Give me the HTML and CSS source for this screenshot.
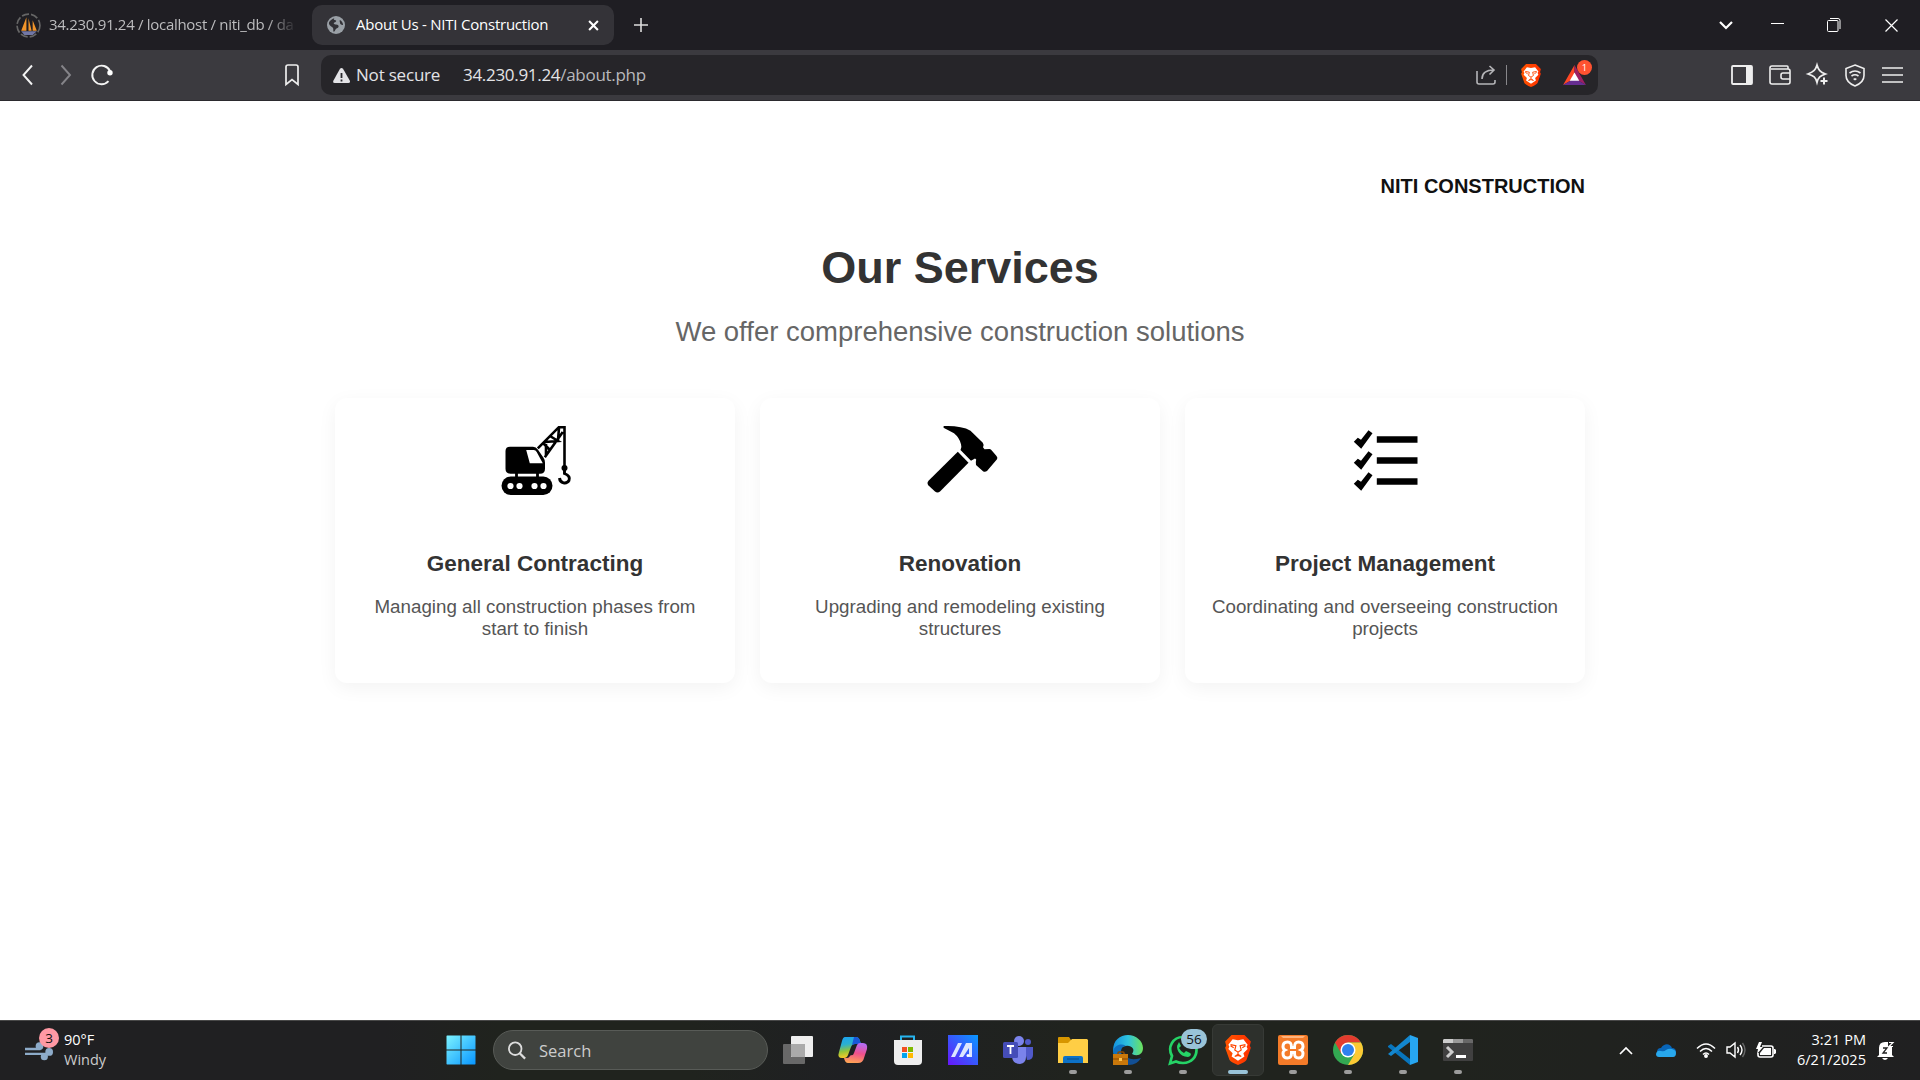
FILE: index.html
```html
<!DOCTYPE html>
<html lang="en">
<head>
<meta charset="utf-8">
<title>About Us - NITI Construction</title>
<link rel="stylesheet" href="styles.css">
</head>
<body>
<div class="tabs">
  <div class="tab">
    <svg class="ic24" viewBox="0 0 24 24"><circle cx="12" cy="12" r="11" fill="none" stroke="#666" stroke-width="1.6" stroke-dasharray="7 2"/><path d="M10 4 5 17h5zM12 5l3 12h-3zM16 7l4 10h-4z" fill="#f2952a"/><path d="M5 17.500h15l-4 3.500H8z" fill="#7277a5"/></svg>
    <span class="tab-text fade">34.230.91.24 / localhost / niti_db / da</span>
  </div>
  <div class="tab active">
    <svg class="globe" viewBox="0 0 18 18"><circle cx="9" cy="9" r="9" fill="#9aa0a6"/><path d="M8 2c-2 1-1 2 .5 2.200C10 4.500 9 6 7.500 6.500S7 8.500 9 8.500s3 1 2.500 2.500S9 12 8.500 13.500 7 16.500 6.500 15.500 7 12 5 11 1.500 8 2 6.500 5 2.500 8 2zM13 4c2 1 3 3 3 5-1 0-3-.5-3-2s-1-2 0-3z" fill="#323136"/></svg>
    <span class="tab-text title">About Us - NITI Construction</span>
    <svg class="tab-x" viewBox="0 0 10 10"><path d="m1 1 8 8m0-8-8 8" stroke="#fff" stroke-width="1.900"/></svg>
  </div>
  <svg class="plus" viewBox="0 0 14 14"><path d="M7 0v14M0 7h14" stroke="#ddd" stroke-width="1.600"/></svg>
  <div class="window">
    <svg width="14" height="10" viewBox="0 0 14 10"><path d="m1 2 6 6 6-6" fill="none" stroke="#fff" stroke-width="2.200"/></svg>
    <svg width="13" height="14" viewBox="0 0 13 14"><path d="M0 5.500h13" stroke="#fff"/></svg>
    <svg width="14" height="14" viewBox="0 0 14 14" fill="none" stroke="#fff"><rect x=".5" y="2.500" width="10.500" height="11" rx="1"/><path d="M3 .5h8a2 2 0 0 1 2 2V11"/></svg>
    <svg width="13" height="13" viewBox="0 0 13 13"><path d="m.5.500 12 12m0-12-12 12" stroke="#fff" stroke-width="1.200"/></svg>
  </div>
</div>
<div class="toolbar">
  <svg class="nav" viewBox="0 0 100 24" fill="none" stroke-width="1.900"><path d="m15 2.500-8.500 9.500 8.500 9.500" stroke="#f3f3f3"/><path d="m44.500 2.500 8.500 9.500-8.500 9.500" stroke="#858489"/><path d="M91.500 18.200A9.300 9.300 0 1 1 93 8" stroke="#f3f3f3"/><circle cx="93" cy="9.800" r="2.700" fill="#fff"/></svg>
  <svg class="bookmark" viewBox="0 0 14 22"><path d="M1 3q0-2 2-2h8q2 0 2 2v17.500l-6-5-6 5z" fill="none" stroke="#eee" stroke-width="1.700"/></svg>
  <div class="address">
    <svg class="warn" viewBox="0 0 17 15"><path d="M7 .8q1.500-1.500 3 0l7 12.200q.5 2-1.500 2h-14Q-.5 15 .2 13z" fill="#e3e3e6"/><path d="M8.500 5v5m0 1.500v2" stroke="#29282d" stroke-width="1.800"/></svg>
    <span class="secure">Not secure</span>
    <span class="url">34.230.91.24<i>/about.php</i></span>
    <svg class="share" viewBox="0 0 20 20" fill="none" stroke="#b5b5b8" stroke-width="1.600"><path d="M1 6v11q0 2 2 2h14q2 0 2-2v-2M6 14c0-6 4-9 12-9M13.500 1 18 5l-4.500 4.500"/></svg>
    <span class="divider"></span>
    <svg class="brave" viewBox="0 0 24 28"><use href="#lion"/></svg>
    <div class="bat"><svg viewBox="0 0 24 21"><path d="M12 0 0 21l12-7z" fill="#ff4724"/><path d="m12 0 12 21-12-7z" fill="#9e1f63"/><path d="M0 21h24l-12-7z" fill="#662d91"/><path d="m12 8 5 8.500H7z" fill="#fff"/></svg><span>1</span></div>
  </div>
  <div class="tools">
    <svg width="22" height="20" viewBox="0 0 22 20"><rect x="1" y="1" width="20" height="18" rx="1" fill="none" stroke="#eee" stroke-width="1.800"/><path d="M15 1h6v18h-6z" fill="#eee"/></svg>
    <svg width="22" height="20" viewBox="0 0 22 20" fill="none" stroke="#eee" stroke-width="1.600"><path d="M19 4V2q0-1-1-1H3Q1 1 1 3v14q0 2 2 2h16q2 0 2-2V6q0-2-2-2H2M21 8h-7q-2 0-2 2v2q0 2 2 2h7"/></svg>
    <svg width="22" height="22" viewBox="0 0 22 22" fill="none" stroke="#eee"><path d="M10 1c1.500 5 3 7 8.500 9C13 12 11.500 13 10 18.500 8.500 13 7 12 1 10 7 7.500 8.500 6 10 1z" stroke-width="1.700"/><path d="M17 13.500v7M13.500 17h7" stroke-width="2"/></svg>
    <svg width="20" height="23" viewBox="0 0 20 23" fill="none" stroke="#eee" stroke-width="1.600"><path d="m10 1 9 3.500v7c0 5-4 8.500-9 10.500-5-2-9-5.500-9-10.500v-7zM4.500 9q5.500-4 11 0M6.500 12q3.500-2.500 7 0"/><path d="m8 15 2-1 2 1-2 1.500z" fill="#eee" stroke="none"/></svg>
    <svg width="21" height="16" viewBox="0 0 21 16"><path d="M0 1h21M0 8h21M0 15h21" stroke="#eee" stroke-width="1.600"/></svg>
  </div>
</div>
<main>
  <div class="brand">NITI CONSTRUCTION</div>
  <h1>Our Services</h1>
  <p class="sub">We offer comprehensive construction solutions</p>
  <div class="cards">
    <section>
      <svg viewBox="0 0 75 75"><path d="M12 22.700h23q3 0 5 3l5.500 8q1.500 2 1.500 5v6q0 5-5 5H12.500q-5 0-5-5V27q0-4.300 4.500-4.300z"/><path d="M28.200 26h7.500q2 0 3 2l6.100 11.300h-13z" fill="#fff"/><path d="M18.500 48v6m21-6v6" stroke="#000" stroke-width="2.800"/><rect x="3.500" y="52.500" width="51" height="18.500" rx="9.200"/><g fill="#fff"><circle cx="12.500" cy="62" r="3.100"/><circle cx="21.500" cy="62" r="3.100"/><circle cx="36.500" cy="62" r="3.100"/><circle cx="45.500" cy="62" r="3.100"/></g><path d="M39.800 24.300 60.800 3.200h5.700V43M46.800 33.300 64.800 8M45 19l7 7M47 18l13-1-8-5M48 20v12M61 4l-1 12" fill="none" stroke="#000" stroke-width="2.600"/><circle cx="66.500" cy="44" r="3"/><path d="M66.500 46v3.500c5 2 5.500 4.500 4.500 7-2.500 4-9 3-9.500-2.500" fill="none" stroke="#000" stroke-width="2.900"/></svg>
      <h2>General Contracting</h2><p>Managing all construction phases from start to finish</p>
    </section>
    <section>
      <svg viewBox="0 0 75 75"><path d="M21 2q9-.5 16.500 1.300 6 .7 10 3.400l12.300 12q1.500 2 .2 4.600l1.500 2 5-.3q1.500.3 2.500 1.700l4.500 5.300q1.500 1.800.5 3.300L64 47q-2 1.500-4 .3L53 41q-.5-3 .2-5.500l-1.200-1-4 2.200L37.500 26q1.500-3 .5-5.700-1.500-6.500-7-11L21 4q-1.500-1 0-2z"/><path d="m34.800 27.700 10.700 11L17 67.500q-2.500 2.200-5 0l-6.500-6q-2-2.500 0-4.800z"/></svg>
      <h2>Renovation</h2><p>Upgrading and remodeling existing structures</p>
    </section>
    <section>
      <svg viewBox="0 0 75 75"><g id="row"><path d="m5.800 17.700 4-4 3.200 2 7.500-9.400 4 3-11.300 15.400z"/><path d="M28.800 12.200h40.700v6.500H28.800z"/></g><use href="#row" y="21"/><use href="#row" y="42"/></svg>
      <h2>Project Management</h2><p>Coordinating and overseeing construction projects</p>
    </section>
  </div>
</main>
<footer>
  <div class="weather">
    <div class="wind"><svg viewBox="0 0 30 22" fill="none" stroke="#8dabc9" stroke-width="2.500"><path d="M0 11h16M0 16h25"/><g fill="#8dabc9" stroke="none"><circle cx="15" cy="8" r="4"/><circle cx="25" cy="14" r="4"/><circle cx="20" cy="19" r="3.700"/></g></svg><span>3</span></div>
    <div class="temp"><b>90°F</b><span>Windy</span></div>
  </div>
  <div class="apps">
    <div class="app start"><svg viewBox="0 0 30 30"><defs><linearGradient id="win" x2="1" y2="1"><stop stop-color="#7df3ff"/><stop offset="1" stop-color="#0795ff"/></linearGradient></defs><path d="M1 .5h13.500v14H.5V1zM15.500.5H29l.5.5v13.500h-14zM.5 15.500h14v14H1l-.5-.5zM15.500 15.500h14V29l-.5.5H15.500z" fill="url(#win)"/></svg></div>
    <div class="search"><svg viewBox="0 0 20 20" fill="none" stroke="#ddd" stroke-width="2"><circle cx="8" cy="8" r="7"/><path d="m13 13 6 6" stroke-width="2.500"/></svg><span>Search</span></div>
    <div class="app"><svg viewBox="0 0 30 30"><rect y="9" width="22" height="20" rx="1" fill="#686868"/><rect x="8" y="1" width="22" height="21" rx="1" fill="#eee"/><path d="M8 9h14v13H9l-1-1z" fill="#aaa"/></svg></div>
    <div class="app"><svg viewBox="0 0 30 30"><defs><linearGradient id="cpa" x2=".2" y2="1"><stop stop-color="#1aa2f5"/><stop offset=".4" stop-color="#2bb0d0"/><stop offset=".7" stop-color="#92c43a"/><stop offset="1" stop-color="#f9c928"/></linearGradient><linearGradient id="cpb" x1=".6" x2=".4" y2="1"><stop stop-color="#b36cf5"/><stop offset=".5" stop-color="#f0508c"/><stop offset="1" stop-color="#ffa355"/></linearGradient></defs><path d="M7 2h11q3 0 4 4l1 3h-6q-3 0-4 3l-3 8q-1 3-4 3H4q-5 0-3-6L4 6q1-4 3-4z" fill="url(#cpa)"/><path d="M16 2h2q3 0 4 4l1 3h-6l-3 1z" fill="#1958d8"/><path d="M22 8h3q5 0 4 6l-3 9q-1 5-6 5H10q-3 0-4-5h3q2 0 3-2l1-1q2 1 3-2l3-8q1-2 3-2z" fill="url(#cpb)"/></svg></div>
    <div class="app"><svg viewBox="0 0 30 30"><path d="M8 6V1.500h13V6" fill="none" stroke="#26b5ef" stroke-width="2"/><path d="M1 5h28v21q0 4-4 4H5q-4 0-4-4z" fill="#eee"/><path d="M9 12h5v5H9z" fill="#f25022"/><path d="M15 12h5v5h-5z" fill="#7fba00"/><path d="M9 18h5v5H9z" fill="#00a4ef"/><path d="M15 18h5v5h-5z" fill="#ffb900"/></svg></div>
    <div class="app"><svg viewBox="0 0 30 30"><defs><linearGradient id="ma" x1="1" x2="0" y2="1"><stop stop-color="#079aff"/><stop offset="1" stop-color="#6915fa"/></linearGradient></defs><path d="M0 0h30v30H0z" fill="url(#ma)"/><path d="M3 22 10 8h4L7 22zM11 22l7-14h6v14h-3V13l-6 9z" fill="#dce5ff"/><circle cx="20" cy="20.500" r="1.500" fill="#fff"/></svg></div>
    <div class="app"><svg viewBox="0 0 30 30"><circle cx="16" cy="6" r="5" fill="#7b83eb"/><circle cx="25" cy="7" r="3" fill="#5059c9"/><path d="M21 12h9v8q0 5-6 5z" fill="#5059c9"/><path d="M9 12h14v10q0 6-6 7-7 0-8-7z" fill="#7b83eb"/><rect y="7" width="15" height="16" rx="1.500" fill="#454db8"/><path d="M4 11h7M7.500 11v8" stroke="#fff" stroke-width="1.800"/></svg></div>
    <div class="app run"><svg viewBox="0 0 30 30"><path d="M0 3q0-1 1-1h10l2 3v5H0z" fill="#d79600"/><path d="M0 8h10l4-4h15l1 1v23H0z" fill="#ffce45"/><path d="M5 28v-5q0-2 2-2h16q2 0 2 2v5z" fill="#0d72c7"/><path d="M9 24h12" stroke="#0b4b83"/></svg></div>
    <div class="app run"><svg viewBox="0 0 30 30"><defs><linearGradient id="edge"><stop stop-color="#1491df"/><stop offset=".5" stop-color="#2ec3df"/><stop offset="1" stop-color="#6de35b"/></linearGradient></defs><path d="M12 18q2 9 16 5-4 7-12 7Q7 29 9 20z" fill="#124f94"/><path d="M0 16C0 5 7 0 15 0s15 6 15 13c0 6-5 9-11 6 4-5-1-9-6-8-5 0-7 4-7 9H1z" fill="url(#edge)"/><path d="M0 16c2-6 8-8 13-5-5 0-6 6-4 9H1z" fill="#0e70c0"/><path d="M5 20v-2q0-1 1-1h4q1 0 1 1v2" fill="none" stroke="#8b4a05" stroke-width="1.500"/><path d="M0 19h15v11H0z" fill="#c9780b"/><path d="M0 24h15" stroke="#874600"/><path d="M6 23h3v3H6z" fill="#ffc44b"/></svg></div>
    <div class="app run"><svg viewBox="0 0 30 30" fill="none" stroke="#25d366"><path d="M2 28.500 4 21C-1 12 5 2 15 2c18 0 18 26 0 26-3 0-5-.5-7-1.500z" stroke-width="2.700"/><path d="M10 9c-3 3 1 13 10 13 4-1 3-4 2-4l-4-2-2 2q-3-1-5-5l2-2-2-4z" fill="#25d366" stroke="none"/></svg><span class="count">56</span></div>
    <div class="app run current"><svg class="big-lion" viewBox="0 0 24 28"><defs><linearGradient id="bravefill"><stop stop-color="#ff5500"/><stop offset="1" stop-color="#ff3000"/></linearGradient></defs><g id="lion"><path d="m6 0-3 3L0 6l1 4-1 2 4 11q1 2 8 5 7-3 8-5l4-11-1-2 1-4-3-3-3-3z" fill="url(#bravefill)"/><path d="m7 4 5 1 5-1 4 5-1 2 1 2-4 4 1 3-6 4-6-4 1-3-4-4 1-2-1-2z" fill="#fff"/><path d="m5 9 5 1-1 4 3 2 3-2-1-4 5-1M8 12l-3-2m11 2 3-2M12 16v2l-3 2 3-1 3 1-3-2" fill="none" stroke="#ff4600" stroke-width="1.100"/></g></svg></div>
    <div class="app run"><svg viewBox="0 0 30 30"><rect width="30" height="30" rx="2" fill="#f47b29"/><path d="M3 1h24l-2 2H5z" fill="#ffb37d"/><path d="M9.500 7c4 0 4 3 4 5.500h3C16.500 10 16.500 7 20.500 7c3 0 4.500 2 4.500 4.500 0 2-1 3-2 3.500 1 .5 2 1.500 2 3.500 0 2.500-1.500 4.500-4.500 4.500-4 0-4-3-4-5.500h-3c0 2.500 0 5.500-4 5.500-3 0-4.500-2-4.500-4.500 0-2 1-3 2-3.500-1-.5-2-1.500-2-3.500C5 9 6.500 7 9.500 7z" fill="none" stroke="#fff" stroke-width="3"/></svg></div>
    <div class="app run"><svg viewBox="0 0 30 30"><circle cx="15" cy="15" r="15" fill="#33a852"/><path d="M2 7.500A15 15 0 0 1 28 7.500H15L8.500 19z" fill="#e33b2e"/><path d="M28 7.500A15 15 0 0 1 15 30l6.500-11L20 10l-5-2.500z" fill="#fcc934"/><circle cx="15" cy="15" r="7.500" fill="#fff"/><circle cx="15" cy="15" r="6" fill="#2f80ed"/></svg></div>
    <div class="app run"><svg viewBox="0 0 30 30"><path d="m0 11 3-2 19 15v6L0 12z" fill="#0875bd"/><path d="m0 19 22-19v7L3 21l-3-2z" fill="#1387cf"/><path d="m22 0 8 3v24l-8 3z" fill="#27a6f1"/></svg></div>
    <div class="app run"><svg viewBox="0 0 30 30"><rect y="4" width="30" height="22" rx="1" fill="#404040"/><path d="M0 8V5l1-1h9v4z" fill="#ccc"/><path d="M10 4h10v4H10z" fill="#999"/><path d="M20 4h9l1 1v3H20z" fill="#686868"/><path d="m4 12 5 5-5 5" fill="none" stroke="#ccc" stroke-width="3"/><path d="M13 21.500h10" stroke="#fff" stroke-width="3"/></svg></div>
  </div>
  <div class="tray">
    <svg class="up" viewBox="0 0 14 9"><path d="m1 8 6-6 6 6" fill="none" stroke="#fff" stroke-width="1.700"/></svg>
    <svg class="cloud" viewBox="0 0 20 13"><path d="M1 8Q1 4 5 4c3-5 9-5 11 0 3 0 4 2 4 4l-3 5H4z" fill="#0865b8"/><path d="M3 13q-3 0-3-3 1-4 5-3 3 1 5-1 3-2 6-1 4 1 4 4 0 4-3 4z" fill="#28a8ed"/></svg>
    <svg class="wifi" viewBox="0 0 20 15" fill="none" stroke="#fff" stroke-width="1.500"><path d="M1 5.500q9-9 18 0M4 8.500q6-6 12 0M7 11.500q3-3 6 0"/><circle cx="10" cy="13" r="1.200" fill="#fff"/></svg>
    <svg class="sound" viewBox="0 0 20 16" fill="none" stroke="#fff" stroke-width="1.400"><path d="M1 5h3l5-4v14l-5-4H1zM11.500 5q2 3 0 6M14 3q4 5 0 10"/><path d="M16.500 1q5 7 0 14" stroke="#666"/></svg>
    <svg class="battery" viewBox="0 0 20 17"><path d="M6 4h9q2 0 2 2v7q0 2-2 2H4q-2 0-2-2v-2" fill="none" stroke="#fff" stroke-width="1.600"/><path d="M8 6h7v7H4v-2zM18 7h1l1 1v3l-1 1h-1zM3 0 0 7h2l-1 5 6-7H4l2-5z" fill="#fff"/></svg>
    <div class="clock"><span>3:21 PM</span><span>6/21/2025</span></div>
    <svg class="bell" viewBox="0 0 17 19"><path d="M2 14V7q0-6 6-6h3v5h4v8l2 2H0zM5 17h6q-3 4-6 0z" fill="#fff"/><path d="M6 7h4l-4 5h4" fill="none" stroke="#222" stroke-width="1.300"/><path d="M12 1.500h4l-4 4h4" fill="none" stroke="#fff" stroke-width="1.200"/></svg>
  </div>
</footer>
</body>
</html>
```
FILE: styles.css
```css
* { box-sizing: border-box; }
body { margin: 0; width: 1920px; height: 1080px; overflow: hidden; display: flex; flex-direction: column; background: #fff; font-family: "Open Sans", "Noto Sans", sans-serif; }
svg { display: block; flex: none; overflow: visible; }
.tabs { height: 50px; background: #1f1e23; display: flex; align-items: center; color: #fff; flex: none; }
.tab { width: 312px; height: 40px; padding-left: 16px; display: flex; align-items: center; gap: 8px; font-size: 15px; white-space: nowrap; }
.ic24 { width: 25px; height: 25px; }
.tab-text { letter-spacing: -.23px; line-height: 20px; padding-bottom: 2px; }
.fade { width: 248px; letter-spacing: -.3px; overflow: hidden; color: #bcbcbe; mask-image: linear-gradient(90deg, #000 88%, transparent); }
.active { width: 302px; background: #343338; border-radius: 10px; padding: 0 15px 0 15px; gap: 11px; }
.title { flex: 1; }
.globe { width: 18px; height: 18px; }
.tab-x { width: 11px; height: 11px; }
.plus { width: 14px; height: 14px; margin-left: 20px; }
.window { margin-left: auto; padding-right: 22px; display: flex; align-items: center; }
.window svg + svg { margin-left: 38px; }
.window svg:nth-child(3) { margin-left: 43px; }
.window svg:nth-child(4) { margin-left: 44px; }
.toolbar { height: 51px; background: #3b3a3f; border-bottom: 1px solid #2b2a2e; display: flex; align-items: center; flex: none; }
.nav { width: 100px; height: 24px; margin-left: 17px; }
.bookmark { width: 14px; height: 22px; margin-left: 168px; }
.address { width: 1277px; height: 40px; margin-left: 22px; border-radius: 10px; background: #262529; display: flex; align-items: center; padding: 0 12px; color: #e3e3e6; font-size: 17px; }
.warn { width: 17px; height: 15px; }
.secure { margin-left: 6px; width: 84px; padding-bottom: 2px; letter-spacing: -.2px; white-space: nowrap; }
.url { margin-left: 23px; padding-bottom: 2px; letter-spacing: -.3px; flex: 1; }
.url i { font-style: normal; color: #b9b9bc; }
.share { width: 20px; height: 20px; }
.divider { width: 1px; height: 20px; background: #88878b; margin: 0 14px 0 10px; }
.brave { width: 20px; height: 23px; }
.bat { margin: 0 -3px 0 22px; width: 26px; position: relative; }
.bat svg { width: 23px; height: 20px; }
.bat span { position: absolute; left: 14px; top: -5px; width: 15px; height: 15px; border-radius: 8px; background: #ff5230; color: #fff; text-align: center; font-size: 9.500px; line-height: 15px; }
.tools { margin-left: auto; padding-right: 17px; display: flex; align-items: center; gap: 16px; }
.tools svg:last-child { margin-left: 1px; }
main { flex: 1; padding: 73px 335px 0; font-family: "Liberation Sans", Arial, sans-serif; color: #333; text-align: center; }
.brand { text-align: right; font-weight: 700; font-size: 20px; line-height: 24px; color: #111; }
h1 { margin: 44px 0 0; font-size: 45px; line-height: 52px; }
.sub { margin: 22px 0 0; font-size: 27.5px; line-height: 32px; color: #666; }
.cards { margin-top: 50px; display: grid; grid-template-columns: repeat(3, 1fr); gap: 25px; }
section { height: 285px; border-radius: 12px; padding: 26px 25px 0; display: flex; flex-direction: column; align-items: center; box-shadow: 0 5px 19px rgba(0, 0, 0, .05); }
section svg { width: 75px; height: 75px; }
h2 { margin: 52px 0 0; font-size: 22.5px; line-height: 26px; }
section p { margin: 19px 0 0; font-size: 18.75px; line-height: 22px; color: #555; }
footer { height: 60px; flex: none; border-top: 1px solid #484848; padding-bottom: 1px; background: linear-gradient(90deg, #202022 20%, #20231e 26%, #20231e 36%, #1f2023 44%, #20231e 56%, #20231e 75%, #202021); display: grid; grid-template-columns: 440px 1fr 300px; align-items: center; color: #fff; }
.weather { display: flex; padding-left: 25px; gap: 6px; }
.wind { width: 33px; position: relative; }
.wind svg { width: 29px; height: 22px; margin-top: 8px; }
.wind span { position: absolute; left: 14px; top: -2px; width: 20px; height: 20px; background: #ff99a4; border-radius: 10px; color: #111; font-size: 13.500px; line-height: 20px; text-align: center; }
.temp { display: flex; flex-direction: column; font-size: 14.500px; line-height: 20px; letter-spacing: 0; color: #ccc; }
.temp b { color: #fff; font-weight: 400; }
.apps { display: flex; align-items: center; }
.app { width: 55px; height: 58px; display: flex; align-items: center; justify-content: center; position: relative; }
.app svg { width: 30px; height: 30px; }
.start { width: 42px; margin-right: 11px; }
.search { width: 275px; height: 40px; margin-right: 2px; border: 1px solid #585b57; border-radius: 20px; background: #40433f; display: flex; align-items: center; gap: 13px; padding-left: 14px; color: #ccc; font-size: 16.500px; }
.search svg { width: 18px; height: 19px; }
.run::after { content: ""; position: absolute; bottom: 5px; width: 8px; height: 4px; border-radius: 2px; background: #9c9c9c; }
.current::before { content: ""; position: absolute; width: 50px; height: 50px; border-radius: 6px; background: #2d302c; border: 1px solid #373a36; }
.current svg { position: relative; }
.current::after { width: 20px; background: #99c3d8; }
.count { position: absolute; left: 26px; top: 8px; width: 26px; height: 20px; border-radius: 10px; background: #99c3d8; color: #111; font-size: 13.500px; line-height: 20px; text-align: center; }
.tray { display: flex; align-items: center; }
.up { width: 14px; height: 9px; margin-left: -1px; }
.cloud { width: 20px; height: 13px; margin-left: 23px; }
.wifi { width: 20px; height: 15px; margin-left: 20px; }
.sound { width: 20px; height: 16px; margin-left: 10px; }
.battery { width: 20px; height: 17px; margin-left: 10px; }
.clock { width: 74px; margin-left: 16px; display: flex; flex-direction: column; align-items: flex-end; font-size: 14.500px; line-height: 20px; letter-spacing: .05px; white-space: nowrap; }
.bell { width: 17px; height: 19px; margin-left: 11px; }
```
